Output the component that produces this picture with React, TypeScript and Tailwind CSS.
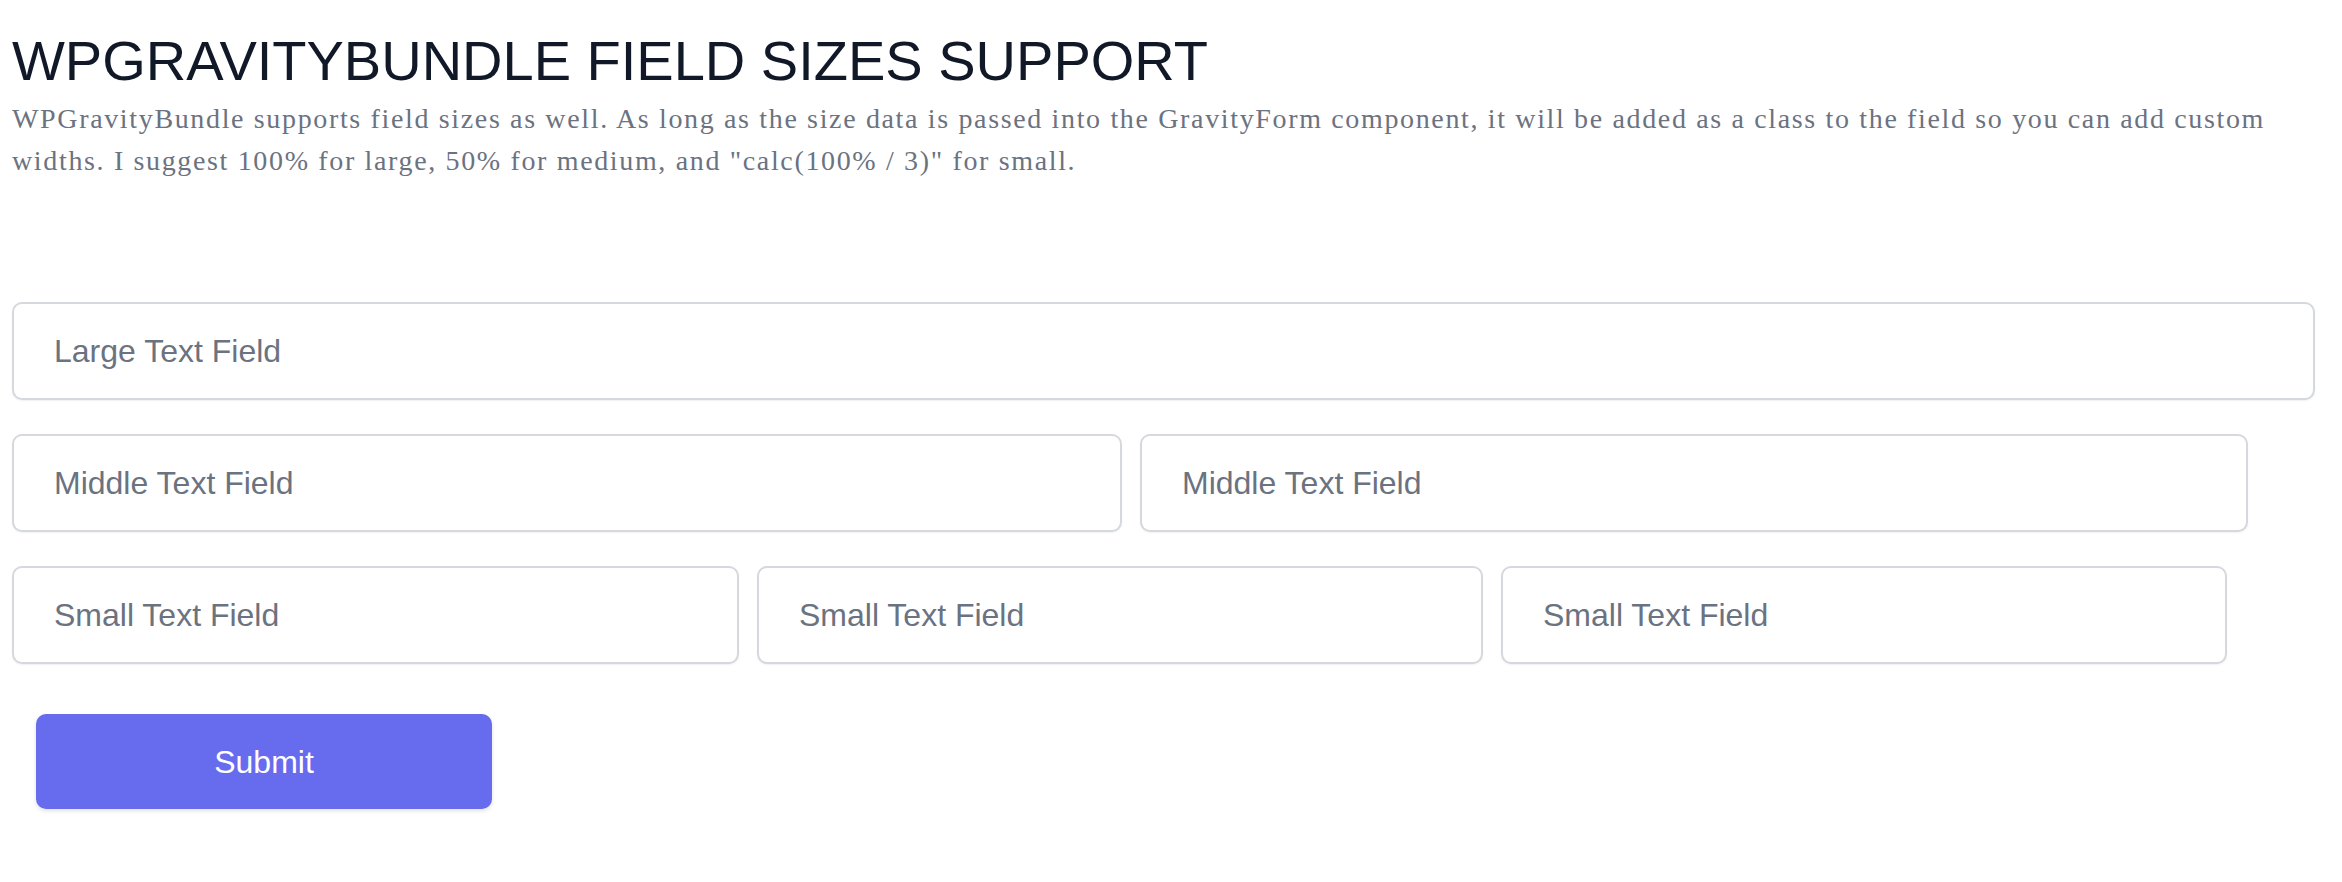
import React from "react";

const sans = "font-['Helvetica','Liberation_Sans',Arial,sans-serif]";

function Field({ label, w }: { label: string; w: string }) {
  return (
    <div
      className={`${w} h-[98px] shrink-0 flex items-center rounded-[10px] border-2 border-[#d5d8dd] bg-white pl-[40px] shadow-[0_1px_2px_rgba(0,0,0,0.06)]`}
    >
      <span className={`${sans} text-[32px] leading-none text-[#6b7280]`}>{label}</span>
    </div>
  );
}

export default function App() {
  return (
    <div className="min-h-[882px] w-full bg-white pl-[12px] pt-[33px]">
      <h1 className={`${sans} text-[56px] leading-[55px] font-normal text-[#111827] mb-[10px]`}>
        WPGRAVITYBUNDLE FIELD SIZES SUPPORT
      </h1>
      <p className="font-['Times_New_Roman','Liberation_Serif',serif] text-[28px] leading-[42px] tracking-[1.65px] text-[#6b7280] w-[2300px]">
        WPGravityBundle supports field sizes as well. As long as the size data is passed into the GravityForm component, it
        will be added as a class to the field so you can add custom widths. I suggest 100% for large, 50% for medium, and
        "calc(100% / 3)" for small.
      </p>
      <form className="mt-[120px] flex flex-col gap-[34px]">
        <div className="flex">
          <Field label="Large Text Field" w="w-[2303px]" />
        </div>
        <div className="flex gap-[18px]">
          <Field label="Middle Text Field" w="w-[1110px]" />
          <Field label="Middle Text Field" w="w-[1108px]" />
        </div>
        <div className="flex gap-[18px]">
          <Field label="Small Text Field" w="w-[727px]" />
          <Field label="Small Text Field" w="w-[726px]" />
          <Field label="Small Text Field" w="w-[726px]" />
        </div>
        <div className="pl-[24px] pt-[16px]">
          <button
            type="button"
            className={`${sans} w-[456px] h-[95px] rounded-[10px] bg-[#676cee] text-white text-[32px] leading-none shadow-[0_2px_4px_rgba(0,0,0,0.12)]`}
          >
            Submit
          </button>
        </div>
      </form>
    </div>
  );
}
